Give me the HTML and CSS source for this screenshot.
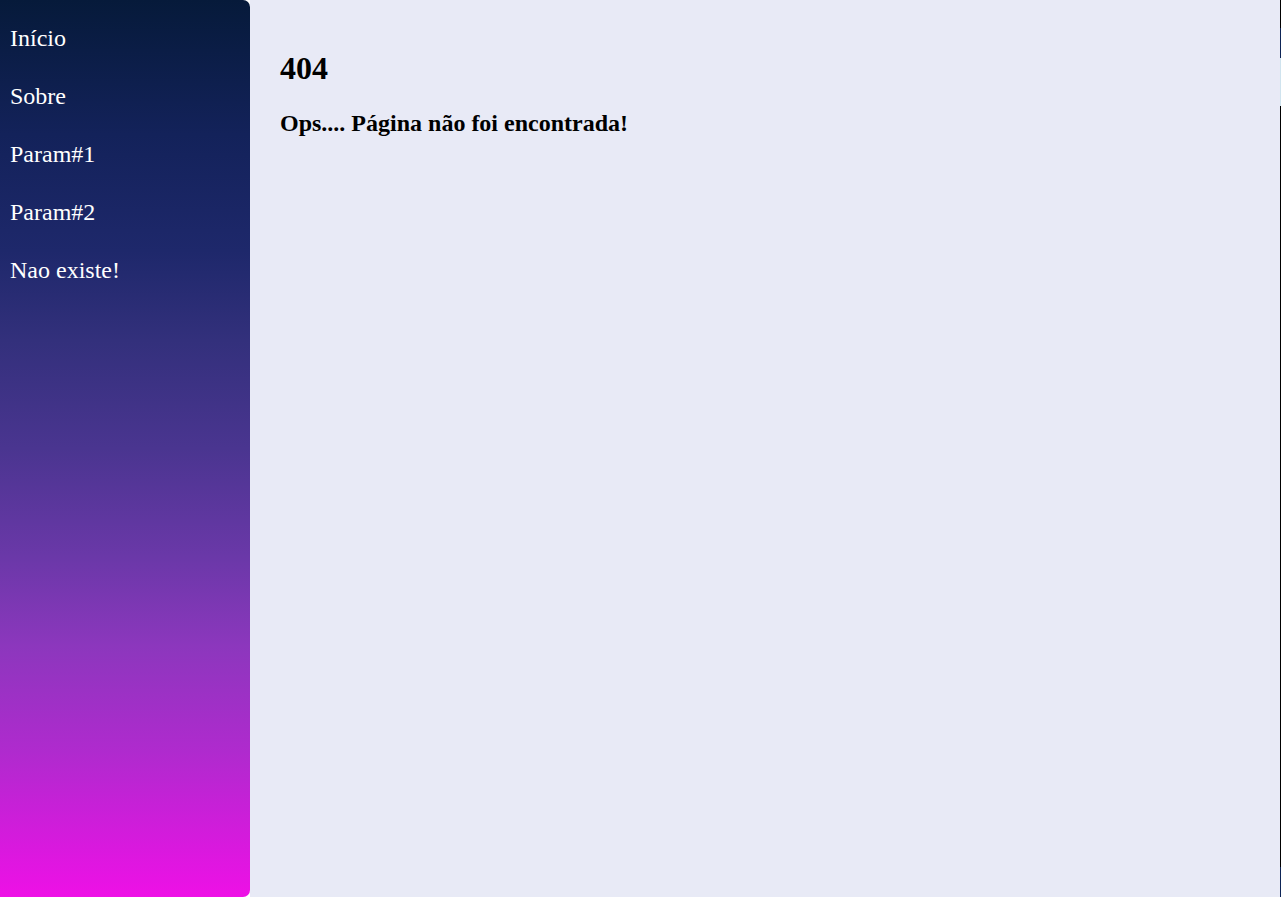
FILE: index.html
```html
<!DOCTYPE html>
<html lang="pt-BR">
<head>
<meta charset="utf-8">
<title>404</title>
<link rel="stylesheet" href="styles.css">
</head>
<body>
<div class="app">
  <nav class="sidebar">
    <a class="nav-link" href="#">Início</a>
    <a class="nav-link" href="#">Sobre</a>
    <a class="nav-link" href="#">Param#1</a>
    <a class="nav-link" href="#">Param#2</a>
    <a class="nav-link" href="#">Nao existe!</a>
  </nav>
  <main class="content">
    <h1 class="title">404</h1>
    <h2 class="subtitle">Ops.... Página não foi encontrada!</h2>
  </main>
  <div class="edge"></div>
</div>
</body>
</html>
```

FILE: styles.css
```css
html, body {
  margin: 0;
  padding: 0;
  height: 100%;
  background: #ffffff;
  font-family: "Liberation Serif", "Times New Roman", serif;
}

.app {
  display: flex;
  height: 897px;
}

.sidebar {
  width: 250px;
  flex: 0 0 250px;
  display: flex;
  flex-direction: column;
  padding-top: 9px;
  box-sizing: border-box;
  border-radius: 0 7px 7px 0;
  background: linear-gradient(to bottom,
    #061a3a 0%,
    #13225a 15%,
    #1e286b 28%,
    #33307c 38%,
    #4a3590 50%,
    #6a38a8 62%,
    #8c37bd 72%,
    #b02ace 84%,
    #ee10e6 100%);
}

.nav-link {
  display: block;
  padding: 15px 10px;
  color: #ffffff;
  text-decoration: none;
  font-size: 24px;
  line-height: 28px;
}

.content {
  flex: 1;
  background: #e8eaf6;
  padding: 29px 30px 30px;
  color: #000000;
}

.title {
  font-size: 32px;
  font-weight: bold;
  margin: 21.44px 0;
}

.subtitle {
  font-size: 24px;
  font-weight: bold;
  margin: 22.6px 0 20px;
}

.edge {
  width: 1px;
  flex: 0 0 1px;
  background: linear-gradient(to bottom,
    #000000 0px, #000000 28px,
    #0d2456 28px, #0d2456 58px,
    #cfe3ee 58px, #cfe3ee 106px,
    #000000 106px, #000000 867px,
    #0d2456 867px, #0d2456 897px);
}
```
